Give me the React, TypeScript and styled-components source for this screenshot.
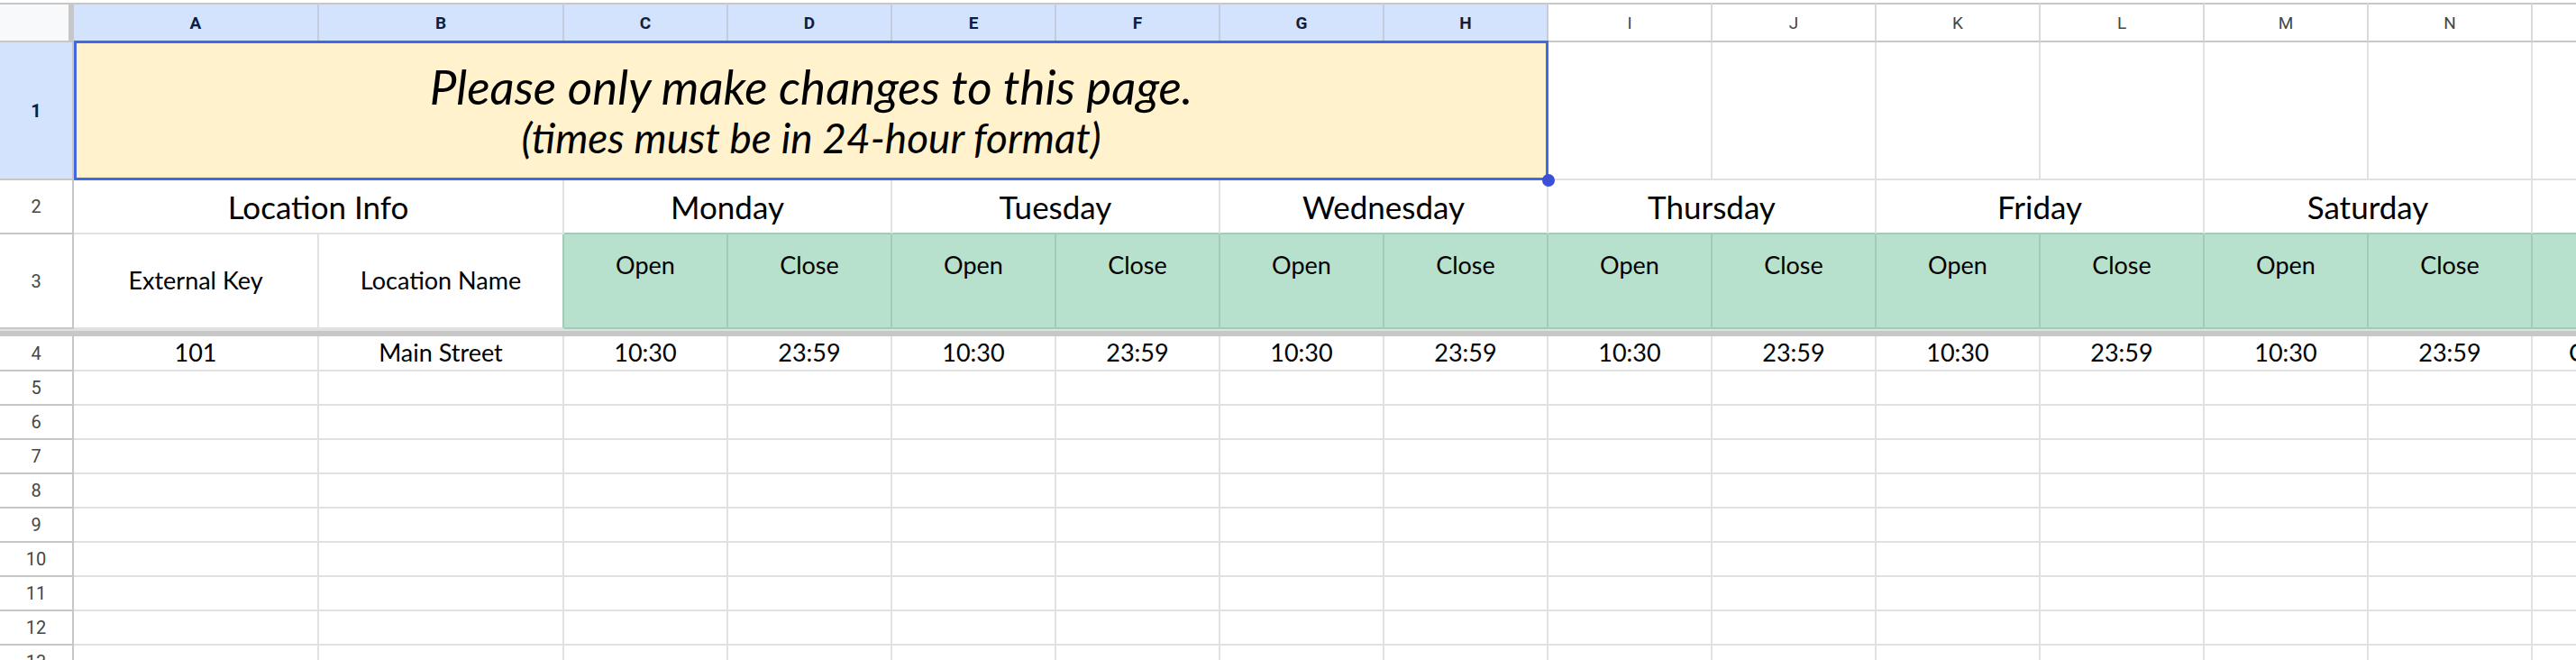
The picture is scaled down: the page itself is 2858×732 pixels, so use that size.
import styled, { createGlobalStyle } from 'styled-components';

const GlobalStyle = createGlobalStyle`
  html, body {
    margin: 0;
    padding: 0;
    background: #ffffff;
  }
  body {
    width: 2858px;
    height: 732px;
    overflow: hidden;
  }
`;

const GRID = '#e1e1e1';
const HEAD_LINE = '#c7c7c7';
const GREEN = '#b7e1cd';
const GREEN_LINE = '#a3cbb7';
const SELECT_BLUE = '#4169e1';

const Sheet = styled.div`
  width: 2858px;
  height: 732px;
  overflow: hidden;
  padding-top: 3px;
  box-sizing: border-box;
  display: grid;
  grid-template-columns: 82px 272px 272px repeat(14, 182px);
  grid-template-rows: 44px 153px 60px 105px 8px 39px repeat(9, 38px);
  font-family: Lato, 'Noto Sans', sans-serif;
  color: #000;
`;

const Corner = styled.div`
  box-sizing: border-box;
  background: #f8f9fa;
  border-top: 2px solid ${HEAD_LINE};
  border-right: 6px solid ${HEAD_LINE};
  border-bottom: 2px solid ${HEAD_LINE};
`;

const ColHeader = styled.div<{ $selected?: boolean }>`
  box-sizing: border-box;
  display: flex;
  align-items: center;
  justify-content: center;
  border-top: 2px solid ${HEAD_LINE};
  border-right: 2px solid ${({ $selected }) => ($selected ? '#c4cde0' : '#d9d9d9')};
  border-bottom: 2px solid ${HEAD_LINE};
  background: ${({ $selected }) => ($selected ? '#d3e3fd' : '#ffffff')};
  color: ${({ $selected }) => ($selected ? '#0b1f44' : '#444746')};
  font-family: Roboto, 'Liberation Sans', sans-serif;
  font-weight: ${({ $selected }) => ($selected ? 700 : 400)};
  font-size: 19px;
`;

const RowHeader = styled.div<{ $selected?: boolean }>`
  box-sizing: border-box;
  display: flex;
  align-items: center;
  justify-content: center;
  border-right: 2px solid ${HEAD_LINE};
  border-bottom: 2px solid ${HEAD_LINE};
  background: ${({ $selected }) => ($selected ? '#d3e3fd' : '#ffffff')};
  color: ${({ $selected }) => ($selected ? '#0b1f44' : '#444746')};
  font-family: Roboto, 'Liberation Sans', sans-serif;
  font-weight: ${({ $selected }) => ($selected ? 700 : 400)};
  font-size: 20px;
`;

const Cell = styled.div<{
  $green?: boolean;
  $greenRight?: boolean;
  $greenBottom?: boolean;
  $top?: boolean;
  $indent?: number;
  $span?: number;
  $size?: number;
}>`
  box-sizing: border-box;
  display: flex;
  align-items: ${({ $top }) => ($top ? 'flex-start' : 'center')};
  justify-content: ${({ $indent }) => ($indent ? 'flex-start' : 'center')};
  padding-top: ${({ $top }) => ($top ? '18px' : '0')};
  padding-left: ${({ $indent }) => ($indent ? `${$indent}px` : '0')};
  grid-column: span ${({ $span }) => $span ?? 1};
  background: ${({ $green }) => ($green ? GREEN : '#ffffff')};
  border-right: 2px solid
    ${({ $green, $greenRight }) => ($green || $greenRight ? GREEN_LINE : GRID)};
  border-bottom: 2px solid
    ${({ $green, $greenBottom }) => ($green || $greenBottom ? GREEN_LINE : GRID)};
  font-size: ${({ $size }) => $size ?? 27}px;
  line-height: 1.2;
  white-space: nowrap;
  overflow: hidden;
`;

const Note = styled.div`
  position: relative;
  grid-column: span 8;
  box-sizing: border-box;
  display: flex;
  flex-direction: column;
  align-items: center;
  justify-content: center;
  padding-top: 2px;
  background: #fff2cc;
  font-style: italic;
`;

const NoteMain = styled.div`
  font-size: 53px;
  line-height: 56px;
`;

const NoteSub = styled.div`
  font-size: 46px;
  line-height: 57px;
`;

const Selection = styled.div`
  position: absolute;
  top: -2px;
  left: 0;
  right: 0;
  bottom: 0;
  border: 3px solid ${SELECT_BLUE};
  pointer-events: none;
`;

const Handle = styled.div`
  position: absolute;
  right: -7px;
  bottom: -7px;
  width: 14px;
  height: 14px;
  border-radius: 50%;
  background: #3b50d6;
`;

const FreezeBar = styled.div`
  grid-column: 1 / -1;
  box-sizing: border-box;
  border-top: 2px solid ${GRID};
  background: #c7c7c7;
`;

const letters = 'ABCDEFGHIJKLMNOP'.split('');
const days = ['Monday', 'Tuesday', 'Wednesday', 'Thursday', 'Friday', 'Saturday', 'Sunday'];
const emptyRows = [5, 6, 7, 8, 9, 10, 11, 12, 13];

export default function App() {
  return (
    <>
      <GlobalStyle />
      <Sheet>
        <Corner />
        {letters.map((l, i) => (
          <ColHeader key={l} $selected={i < 8}>
            {l}
          </ColHeader>
        ))}

        <RowHeader $selected>1</RowHeader>
        <Note>
          <NoteMain>Please only make changes to this page.</NoteMain>
          <NoteSub>(times must be in 24-hour format)</NoteSub>
          <Selection />
          <Handle />
        </Note>
        {letters.slice(8).map((l) => (
          <Cell key={`r1-${l}`} />
        ))}

        <RowHeader>2</RowHeader>
        <Cell $span={2} $size={35}>
          Location Info
        </Cell>
        {days.map((d) => (
          <Cell key={d} $span={2} $size={35} $greenBottom>
            {d}
          </Cell>
        ))}

        <RowHeader>3</RowHeader>
        <Cell>External Key</Cell>
        <Cell $greenRight>Location Name</Cell>
        {days.flatMap((d) => [
          <Cell key={`${d}-open`} $green $top>
            Open
          </Cell>,
          <Cell key={`${d}-close`} $green $top>
            Close
          </Cell>,
        ])}

        <FreezeBar />

        <RowHeader>4</RowHeader>
        <Cell>101</Cell>
        <Cell>Main Street</Cell>
        {days.slice(0, 6).flatMap((d) => [
          <Cell key={`${d}-v-open`}>10:30</Cell>,
          <Cell key={`${d}-v-close`}>23:59</Cell>,
        ])}
        <Cell $indent={40}>Closed</Cell>
        <Cell>Closed</Cell>

        {emptyRows.flatMap((r) => [
          <RowHeader key={`rh-${r}`}>{r}</RowHeader>,
          ...letters.map((l) => <Cell key={`${r}-${l}`} />),
        ])}
      </Sheet>
    </>
  );
}
